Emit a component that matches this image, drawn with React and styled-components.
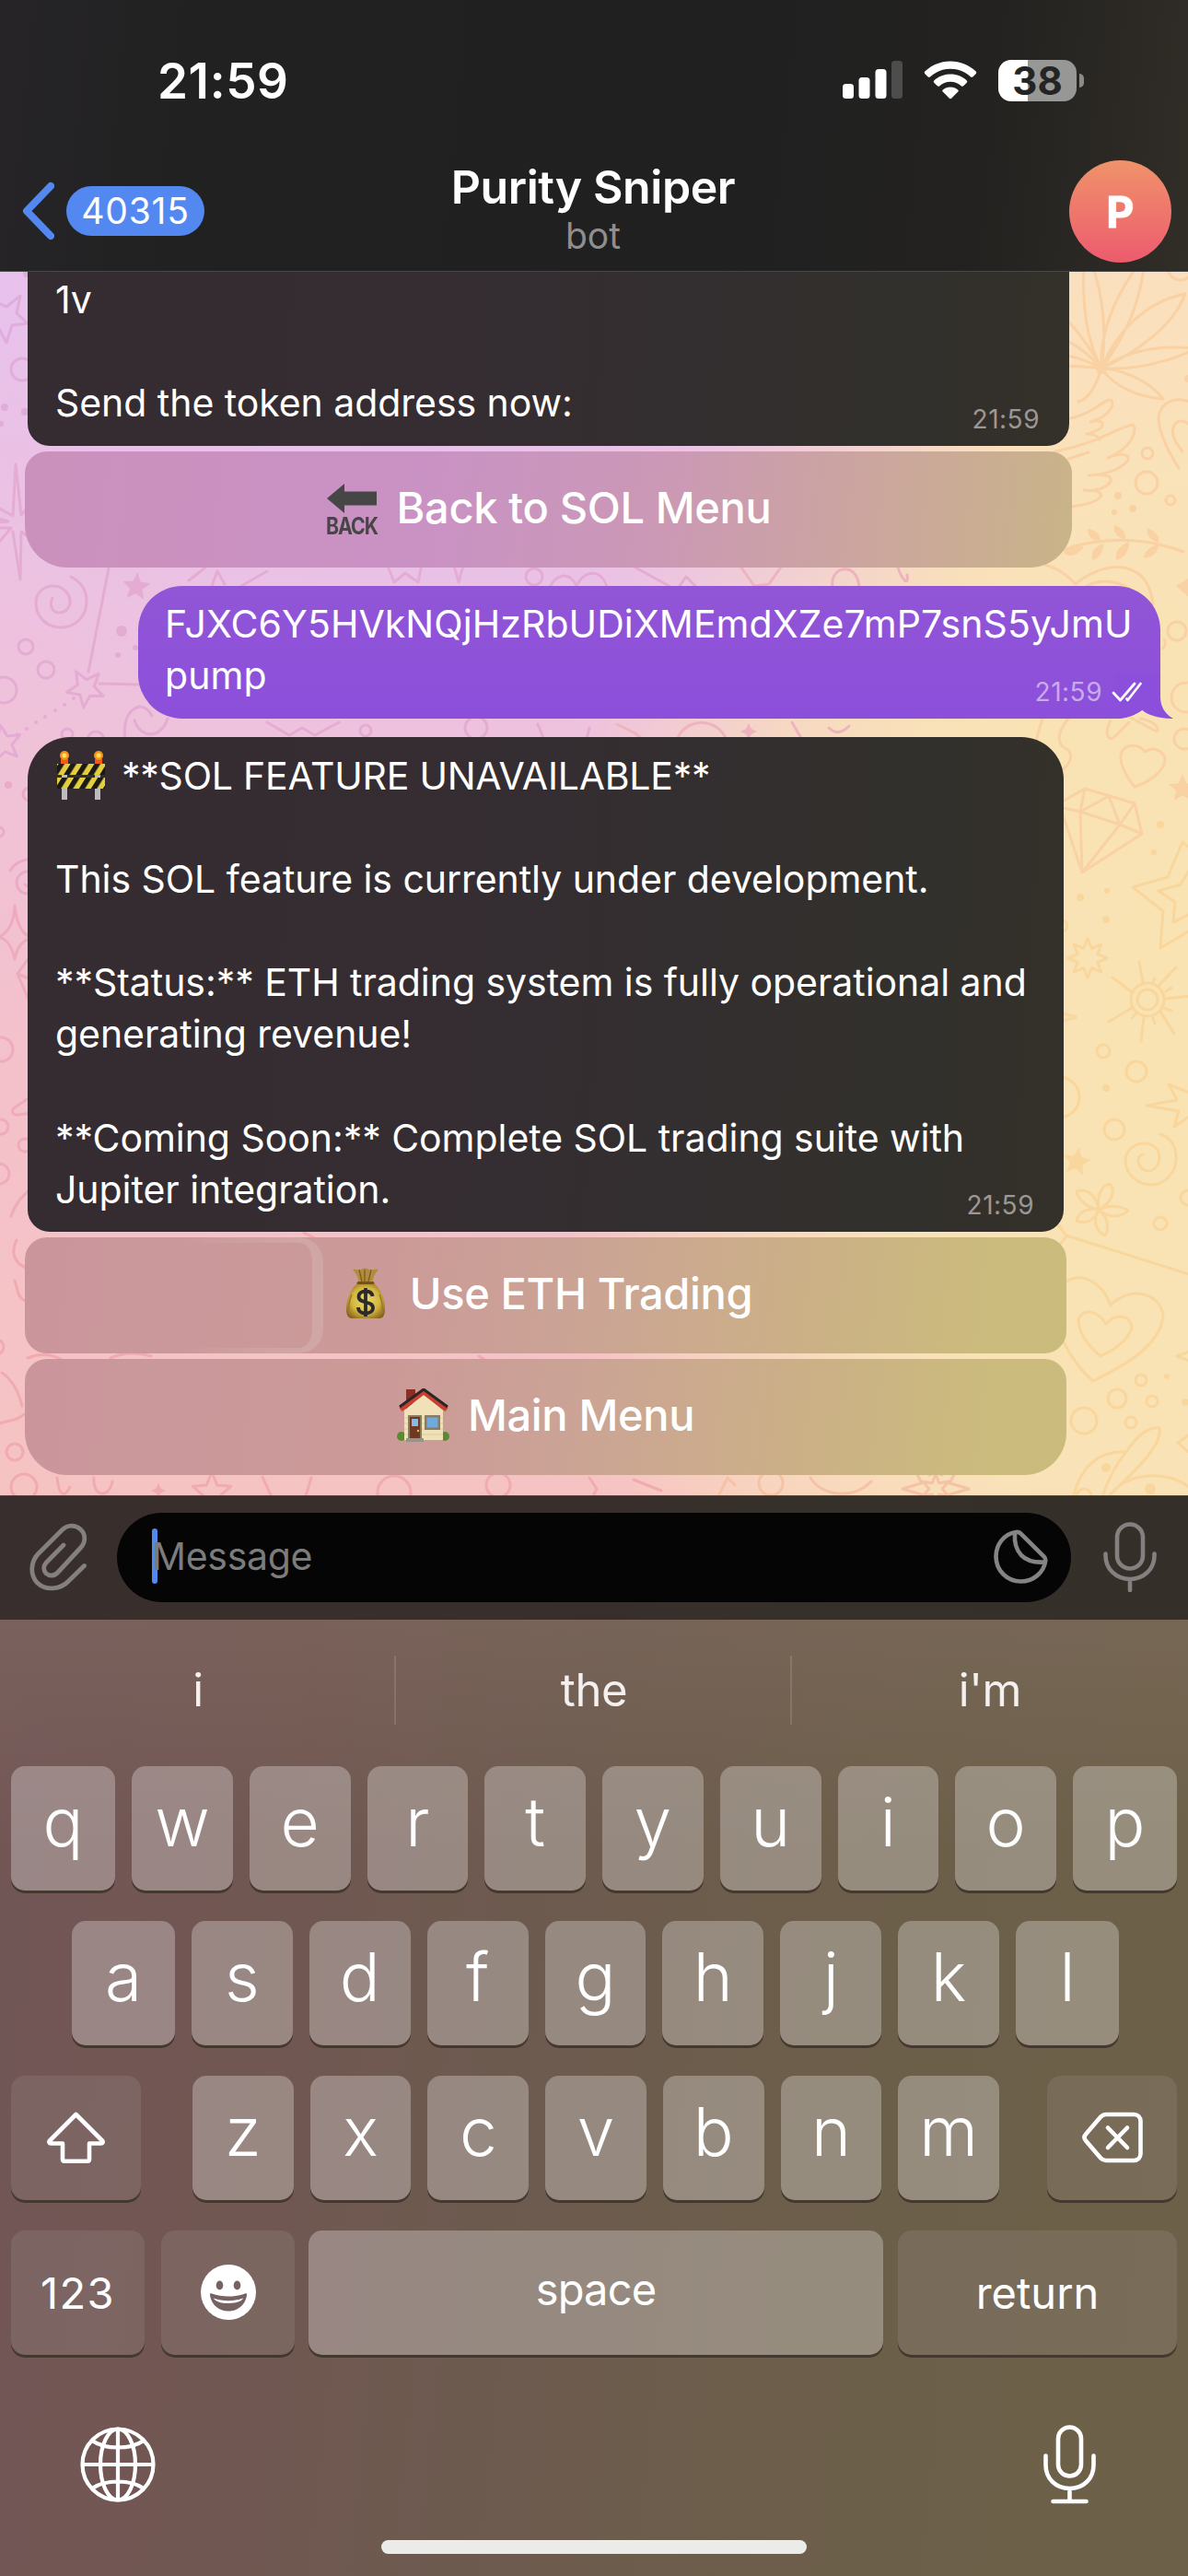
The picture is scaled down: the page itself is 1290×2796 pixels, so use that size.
import React from "react";
import styled, { createGlobalStyle, css } from "styled-components";

const GlobalStyle = createGlobalStyle`
  * { box-sizing: border-box; }
  body { margin: 0; background: #202020; }
`;

const Screen = styled.div`
  width: 1290px;
  height: 2796px;
  display: flex;
  flex-direction: column;
  overflow: hidden;
  color: #fff;
  font-family: "Inter", "Liberation Sans", sans-serif;
`;

/* ---------- header ---------- */

const Header = styled.header`
  height: 295px;
  flex: none;
  border-bottom: 1px solid #47474a;
  background: linear-gradient(96deg, #262427 0%, #212121 18%, #202020 60%, #232220 82%, #312d27 100%);
`;

const StatusBar = styled.div`
  height: 174px;
  padding: 0 113px 0 171px;
  display: flex;
  align-items: center;
  justify-content: space-between;
`;

const Clock = styled.div`
  font-size: 53px;
  font-weight: 600;
  letter-spacing: 0.6px;
  padding-top: 1px;
`;

const StatusIcons = styled.div`
  display: flex;
  align-items: center;
  gap: 23px;
`;

const BatteryWrap = styled.div`
  display: flex;
  align-items: center;
  gap: 3px;
`;

const BatteryBody = styled.div`
  width: 85px;
  height: 45px;
  border-radius: 14px;
  display: flex;
  align-items: center;
  justify-content: center;
  font-size: 42px;
  line-height: 45px;
  font-weight: 700;
  color: #242424;
  background: linear-gradient(90deg, #fff 38%, #979796 38%);
`;

const BatteryNub = styled.div`
  width: 5px;
  height: 15px;
  border-radius: 0 5px 5px 0;
  background: #8b8b8a;
`;

const NavBar = styled.nav`
  display: grid;
  grid-template-columns: 1fr auto 1fr;
  align-items: center;
  height: 111px;
  padding: 0 18px 0 23px;
`;

const BackLink = styled.div`
  display: flex;
  align-items: center;
  gap: 13px;
  padding-bottom: 2px;
`;

const CountPill = styled.span`
  width: 150px;
  height: 54px;
  border-radius: 27px;
  background: #5288f0;
  font-size: 39px;
  line-height: 54px;
  letter-spacing: 0.8px;
  text-align: center;
`;

const TitleBlock = styled.div`
  display: flex;
  flex-direction: column;
  align-items: center;
  padding: 0 7px 6px 0;
`;

const Title = styled.h1`
  margin: 0;
  font-size: 50px;
  line-height: 50px;
  font-weight: 600;
  letter-spacing: -0.4px;
`;

const Subtitle = styled.div`
  margin-top: 8px;
  font-size: 39px;
  line-height: 39px;
  color: #8e8e8e;
`;

const Avatar = styled.div`
  justify-self: end;
  width: 111px;
  height: 111px;
  border-radius: 50%;
  background: linear-gradient(#f0936a, #ec5b6e);
  font-size: 46px;
  line-height: 112px;
  font-weight: 700;
  text-align: center;
  -webkit-text-stroke: 1px #fff;
`;

/* ---------- chat ---------- */

const Chat = styled.main`
  position: relative;
  height: 1328px;
  flex: none;
  display: flex;
  flex-direction: column;
  align-items: flex-start;
  overflow: hidden;
  background:
    radial-gradient(ellipse 620px 420px at 36% 14%, #e8c1ea 0%, rgba(232, 193, 234, 0) 100%),
    radial-gradient(ellipse 760px 1000px at 104% 62%, #f9e3b3 0%, #f9e3b5 45%, rgba(249, 227, 181, 0) 100%),
    linear-gradient(90deg, rgba(251, 222, 196, 0) 50%, #fbdec2 88%),
    linear-gradient(180deg, #e8c1ee 0%, #edc1e0 22%, #f0c2d8 40%, #f4c1cb 65%, #f6c3c3 100%);
`;

const Wallpaper = styled.svg`
  position: absolute;
  inset: 0;
`;

const Bubble = styled.div`
  position: relative;
  flex: none;
  width: ${(p) => p.$width}px;
  height: ${(p) => p.$height}px;
  font-size: 41px;
  line-height: 56.1px;
  white-space: nowrap;
  ${(p) =>
    p.$outgoing
      ? css`
          margin: 20px 30px 20px auto;
          padding: 13px 29px;
          border-radius: 48px;
          letter-spacing: 0.06px;
          background: linear-gradient(#9155d6, #8c4fdb);
        `
      : css`
          margin-left: 30px;
          padding: ${p.$clipped ? 2 : 14}px 30px;
          border-radius: ${p.$clipped ? "0 0" : "46px 46px"} 24px 24px;
          letter-spacing: -0.05px;
          background: linear-gradient(94deg, #342c30 0%, #342d31 50%, #32302d 80%, #34302a 100%);
        `}
`;

const Meta = styled.div`
  position: absolute;
  right: ${(p) => (p.$outgoing ? 20 : 32)}px;
  bottom: 15px;
  display: flex;
  align-items: center;
  gap: 10px;
  font-size: 28px;
  line-height: 28px;
  letter-spacing: 0.5px;
  color: ${(p) => (p.$outgoing ? "#c9aaec" : "#9b9797")};
`;

const Tail = styled.svg`
  position: absolute;
  right: -14px;
  bottom: 0;
`;

const Heading = styled.div`
  display: flex;
  align-items: center;
  gap: 16px;
  height: 56.1px;
  letter-spacing: -0.23px;
`;

const Blank = styled.div`
  height: 56.1px;
`;

const InlineButton = styled.button`
  position: relative;
  flex: none;
  width: ${(p) => p.$width}px;
  height: 126px;
  margin: 6px 0 0 27px;
  padding: 0 0 5px;
  border: 0;
  border-radius: ${(p) => (p.$last ? "24px 24px 46px 46px" : "24px")};
  display: flex;
  align-items: center;
  justify-content: center;
  gap: 20px;
  color: #fff;
  font: 500 47px "Inter", sans-serif;
  letter-spacing: -0.35px;
  background: ${(p) =>
    p.$tone === "violet"
      ? "linear-gradient(97deg, #cb91bd 0%, #c992c4 38%, #cb98b6 60%, #cba79c 82%, #c9b488 100%)"
      : "linear-gradient(97deg, #ca969c 0%, #cb9a98 35%, #cba396 52%, #cbb087 74%, #cbbb7d 92%, #cabc7c 100%)"};
`;

const Progress = styled.span`
  position: absolute;
  left: 0;
  top: 0;
  width: 324px;
  height: 126px;
  border: solid rgba(255, 255, 255, 0.13);
  border-width: 6px 12px 6px 0;
  border-radius: 0 26px 26px 0;
  mask-image: linear-gradient(90deg, transparent 50%, #000 92%);
`;

/* ---------- composer ---------- */

const Composer = styled.div`
  flex: none;
  height: 135px;
  padding: 18px 36px 0 32px;
  display: flex;
  align-items: flex-start;
  border-top: 1px solid #4c4542;
  background: linear-gradient(90deg, #382e2d 0%, #382e2c 45%, #36302a 65%, #342f29 100%);
`;

const ComposerIcon = styled.span`
  flex: none;
  display: flex;
  align-items: center;
  height: 96px;
  color: #848080;
`;

const Input = styled.div`
  flex: none;
  width: 1036px;
  height: 97px;
  margin: 0 35px 0 32px;
  padding: 0 25px 3px 38px;
  border-radius: 49px;
  display: flex;
  align-items: center;
  background: #050505;
  font-size: 41px;
  letter-spacing: -0.3px;
  color: #7c7c7c;
`;

const Caret = styled.span`
  width: 6px;
  height: 60px;
  margin-right: -6px;
  border-radius: 3px;
  background: #5288f0;
`;

const StickerSlot = styled.span`
  display: flex;
  margin-left: auto;
`;

/* ---------- keyboard ---------- */

const Keyboard = styled.section`
  flex: 1;
  display: flex;
  flex-direction: column;
  background:
    linear-gradient(180deg, rgba(132, 110, 100, 0.45) 0%, rgba(112, 94, 84, 0) 24%),
    linear-gradient(96deg, #725657 0%, #715752 22%, #6c5b4e 48%, #6c5f4a 72%, #6c6148 100%);
`;

const Suggestions = styled.div`
  display: flex;
  padding-top: 39px;
  margin-bottom: 45px;
`;

const Suggestion = styled.div`
  flex: 1;
  height: 75px;
  line-height: 76px;
  font-size: 49px;
  letter-spacing: -0.4px;
  text-align: center;
  color: #f3f0ef;
  & + & {
    box-shadow: -2px 0 0 rgba(255, 255, 255, 0.13);
  }
`;

const Keys = styled.div`
  display: flex;
  flex-direction: column;
  gap: 33px;
`;

const KeyRow = styled.div`
  display: flex;
  gap: 18px;
  padding: ${(p) => (p.$inset ? "0 75px 0 78px" : "0 12px")};
`;

const Key = styled.div`
  height: 135px;
  display: flex;
  align-items: center;
  justify-content: center;
  border-radius: 15px;
  box-shadow: 0 3px 0 #45382f;
  ${(p) => (p.$width ? `width: ${p.$width}px; flex: none;` : "flex: 1;")}
  margin: 0 ${(p) => p.$after ?? 0}px 0 ${(p) => p.$before ?? 0}px;
  ${(p) =>
    p.$kind === "letter"
      ? "font-size: 73px; font-weight: 350; padding-bottom: 14px;"
      : `font-size: 47px; font-weight: 400; padding-bottom: ${p.$lift ?? 1}px;`}
  letter-spacing: ${(p) => p.$track ?? 0}px;
  ${(p) =>
    p.$kind === "control"
      ? "background: color-mix(in srgb, transparent, #a39d98 21%);"
      : "background: rgba(255, 255, 255, 0.285);"}
`;

const BottomBar = styled.div`
  display: flex;
  justify-content: space-between;
  align-items: center;
  height: 88px;
  margin-top: 75px;
  padding: 0 100px 0 87px;
`;

const HomeIndicator = styled.div`
  width: 462px;
  height: 15px;
  margin: 38px auto 0;
  border-radius: 8px;
  background: #ebebea;
`;

/* ---------- icons ---------- */

const Signal = () => (
  <svg width="65" height="42" viewBox="0 0 65 42" fill="#fff">
    <rect x="0" y="25" width="12" height="16" rx="3.5" />
    <rect x="17.5" y="18" width="12" height="23" rx="3.5" />
    <rect x="35.5" y="9" width="12" height="32" rx="3.5" />
    <rect x="53" y="0" width="12" height="41" rx="3.5" fill="#4d4d4d" />
  </svg>
);

const Wifi = () => (
  <svg width="58" height="42" viewBox="0 0 58 42" fill="#fff">
    <path d="M29 0.5c10.800 0 20.500 4.200 27.700 11 .7.700.7 1.700.1 2.400l-3.500 3.500c-.6.600-1.500.6-2.200.1C45.200 12 37.500 8.800 29 8.800S12.800 12 6.900 17.500c-.7.500-1.600.5-2.200-.1l-3.500-3.500c-.6-.7-.6-1.700.1-2.400C8.500 4.700 18.200.5 29 .5z" />
    <path d="M29 14.500c6.900 0 13.100 2.600 17.800 6.900.7.600.7 1.600 0 2.300l-3.600 3.600c-.6.600-1.500.6-2.200.1C37.800 24.500 33.600 22.800 29 22.800s-8.800 1.700-12 4.600c-.7.500-1.600.5-2.200-.1l-3.600-3.600c-.7-.7-.7-1.700 0-2.300 4.700-4.300 10.900-6.900 17.800-6.900z" />
    <path d="M29 28.500c3.200 0 6 1.100 8.200 2.900.7.600.7 1.500.1 2.200l-7.200 7.200c-.6.600-1.600.6-2.200 0l-7.200-7.200c-.6-.7-.6-1.600.1-2.200 2.200-1.800 5-2.900 8.200-2.900z" />
  </svg>
);

const BackChevron = () => (
  <svg width="36" height="64" viewBox="0 0 36 64" fill="none" stroke="#5288f0" strokeWidth="8" strokeLinecap="round" strokeLinejoin="round">
    <path d="M32 5 6 32 32 59" />
  </svg>
);

const DoubleCheck = () => (
  <svg width="33" height="22" viewBox="0 0 33 22" fill="none" stroke="#fff" strokeWidth="2.700" strokeLinecap="round" strokeLinejoin="round">
    <path d="M2 12 9.500 20 25 2M16.500 18.500 17.500 20 31.500 2" />
  </svg>
);

const Barricade = () => (
  <svg width="56" height="56" viewBox="0 0 56 56">
    <defs>
      <pattern id="stripes" width="13" height="14" patternUnits="userSpaceOnUse" patternTransform="skewX(-32)">
        <rect width="13" height="14" fill="#e3cf3b" />
        <rect width="6.500" height="14" fill="#1c1a17" />
      </pattern>
    </defs>
    <rect x="7" y="22" width="6" height="32" fill="#bcbcc0" />
    <rect x="43" y="22" width="6" height="32" fill="#bcbcc0" />
    <rect x="6" y="10" width="8" height="5" fill="#f05a1c" />
    <rect x="43" y="10" width="8" height="5" fill="#f05a1c" />
    <circle cx="10" cy="6" r="5" fill="#f7951d" />
    <circle cx="47" cy="6" r="5" fill="#f7951d" />
    <circle cx="10" cy="6" r="2.500" fill="#ffe25a" />
    <circle cx="47" cy="6" r="2.500" fill="#ffe25a" />
    <rect x="2" y="15" width="52" height="12" fill="url(#stripes)" />
    <rect x="2" y="30" width="52" height="12" fill="url(#stripes)" />
  </svg>
);

const BackArrowWord = styled.span`
  width: 57px;
  display: flex;
  flex-direction: column;
  align-items: center;
  gap: 3px;
  color: #474647;
  font-size: 25px;
  line-height: 22px;
  font-weight: 700;
  letter-spacing: -1.2px;
  padding-top: 6px;
`;

const Condensed = styled.span`
  transform: scaleX(0.85);
`;

const BackEmoji = () => (
  <BackArrowWord>
    <svg width="54" height="32" viewBox="0 0 54 32" fill="#474647">
      <path d="M0 16 19 0V8.500H54V23.500H19V32z" />
    </svg>
    <Condensed>BACK</Condensed>
  </BackArrowWord>
);

const MoneyBag = () => (
  <svg width="57" height="57" viewBox="0 0 57 57">
    <defs>
      <radialGradient id="bag" cx=".5" cy=".5" r=".6">
        <stop offset="0" stopColor="#eadb74" />
        <stop offset=".6" stopColor="#d3b53f" />
        <stop offset="1" stopColor="#86631c" />
      </radialGradient>
    </defs>
    <path d="M15 3c4-2 6 2 9 0s5-2 9 0 5-2 10 0c-4 4-6 9-7 15H22C21 12 19 7 15 3z" fill="#b08d3c" />
    <path d="M22 3l3 13M28 3v14M35 3l-3 13" stroke="#7d5b21" strokeWidth="1.300" fill="none" />
    <path d="M22 17h14c8 4 14 17 14 29 0 6-2 10-6 10H14c-4 0-6-4-6-10 0-12 6-25 14-29z" fill="url(#bag)" />
    <path d="M21 17.500h16" stroke="#75521c" strokeWidth="3" strokeLinecap="round" />
    <path d="M14 30c-3 7-4 14-3 21M44 30c3 7 4 14 3 21" stroke="#9a7828" strokeWidth="1.500" fill="none" />
    <path d="M36.500 32c-.5-4-4-5.500-7.500-5.500-4 0-7.500 2-7.500 6 0 8 15.500 4 15.500 12 0 4-4 6-8 6s-8-2-8-6.500M29 23v31" fill="none" stroke="#2c2a2b" strokeWidth="3.800" />
  </svg>
);

const House = () => (
  <svg width="57" height="58" viewBox="0 0 57 58">
    <circle cx="5" cy="52" r="5" fill="#5b8a32" />
    <circle cx="52" cy="52" r="5" fill="#5b8a32" />
    <path d="M10 1h10v13l-10 9z" fill="#8c2f22" />
    <path d="M8 56V24L29 6l21 18v32z" fill="#f0e1b8" />
    <path d="M8 32h42M8 38h42M8 44h42M8 50h42" stroke="#dccb9d" strokeWidth="1" />
    <path d="M4 23 29 4l25 19" fill="none" stroke="#c8402f" strokeWidth="5" strokeLinejoin="miter" />
    <path d="M3 20 29 1l26 19" fill="none" stroke="#2b2526" strokeWidth="3" />
    <rect x="12" y="29" width="15" height="26" fill="#8a7b63" />
    <rect x="14" y="31" width="11" height="24" fill="#6e3823" />
    <rect x="16" y="33" width="7" height="8" fill="#86b9e6" />
    <circle cx="23" cy="46" r="1.200" fill="#f2c13e" />
    <rect x="30" y="29" width="17" height="16" fill="#8a7b63" />
    <rect x="32.500" y="31.500" width="12" height="11" fill="#6fa9dd" />
    <rect x="10" y="54" width="19" height="4" fill="#98928a" />
  </svg>
);

const Paperclip = () => (
  <svg width="63" height="74" viewBox="0 0 63 74" fill="none" stroke="currentColor" strokeWidth="4.800" strokeLinecap="round" strokeLinejoin="round">
    <path d="M59.500 46.500 42 63.500C34 72 18 74 8.500 65 0 56 1.500 42 9.500 33.500L35.500 7.500c5.500-5.500 14-6 20-.5 6 5.500 5.500 14.500 0 20L30.500 54c-3.500 3.700-9 4-12.500.8-3.300-3.300-3-8.500.5-12L37 24" />
  </svg>
);

const Sticker = () => (
  <svg width="59" height="59" viewBox="0 0 59 59" fill="none" stroke="#848484" strokeWidth="4.600" strokeLinecap="round" strokeLinejoin="round">
    <path d="M24 3C11 5 2.500 16.500 2.500 29.500c0 15 12 27 27 27 13.500 0 25-9.500 26.800-22.500.2-2-.3-3-1.600-4.300L29 4.200C27.600 2.900 26 2.600 24 3z" />
    <path d="M23 4c-1.500 20 9 33 32 31.500" />
  </svg>
);

const ComposerMic = () => (
  <svg width="58" height="76" viewBox="0 0 58 76" fill="none" stroke="currentColor" strokeWidth="4.600" strokeLinecap="round">
    <rect x="15" y="2.500" width="28" height="48" rx="14" />
    <path d="M2.500 34.500v2C2.500 51 14 62 29 62s26.500-11 26.500-25.500v-2M29 62v12" />
  </svg>
);

const ShiftIcon = () => (
  <svg width="65" height="56" viewBox="0 0 65 56" fill="none" stroke="#fff" strokeWidth="4.600" strokeLinejoin="round">
    <path d="M32.500 3 61 31.500c1.300 1.300.5 3-1.300 3H47v17c0 1.500-.8 2.300-2.300 2.300H20.300c-1.500 0-2.300-.8-2.300-2.300v-17H5.300c-1.800 0-2.600-1.700-1.300-3z" />
  </svg>
);

const BackspaceIcon = () => (
  <svg width="66" height="56" viewBox="0 0 66 56" fill="none" stroke="#fff" strokeWidth="4.600" strokeLinejoin="round" strokeLinecap="round">
    <path d="M26 3h30c4.500 0 7.500 3 7.500 7.500v35c0 4.500-3 7.500-7.500 7.500H26c-2.500 0-4-.8-5.500-2.300L4 31.500c-2-2.300-2-4.700 0-7L20.500 5.300C22 3.800 23.500 3 26 3z" />
    <path d="M28 17.500 49 39M49 17.500 28 39" />
  </svg>
);

const SmileyIcon = () => (
  <svg width="60" height="60" viewBox="0 0 60 60">
    <circle cx="30" cy="30" r="30" fill="#fff" />
    <ellipse cx="20.500" cy="22.500" rx="3.800" ry="5" fill="#766262" />
    <ellipse cx="39.500" cy="22.500" rx="3.800" ry="5" fill="#766262" />
    <path d="M12 31.500c11 4 25 4 36 0 1.500-.5 2.300.3 2 1.800C48.500 43.500 40.500 50.500 30 50.500S11.500 43.500 10 33.300c-.3-1.500.5-2.300 2-1.800z" fill="#766262" />
    <path d="M14 36.500c10 3.500 22 3.500 32 0-1.500 3.500-7.500 5.500-16 5.500s-14.500-2-16-5.500z" fill="#fff" />
  </svg>
);

const GlobeIcon = () => (
  <svg width="82" height="82" viewBox="0 0 82 82" fill="none" stroke="#fff" strokeWidth="4.200">
    <circle cx="41" cy="41" r="38.500" />
    <ellipse cx="41" cy="41" rx="19" ry="38.500" />
    <path d="M41 2.500v77M2.500 41h77M13 15c14 10 42 10 56 0M13 67c14-10 42-10 56 0" />
  </svg>
);

const DictationMic = () => (
  <svg width="57" height="86" viewBox="0 0 57 86" fill="none" stroke="#fff" strokeWidth="4.600" strokeLinecap="round">
    <rect x="16" y="2.500" width="25" height="53" rx="12.500" />
    <path d="M2.500 33.500v10C2.500 58 13 69 28.500 69s26-11 26-25.500v-10M28.500 69v14M10.500 83h36" />
  </svg>
);

/* ---------- wallpaper doodles ---------- */

const starPath = (cx, cy, r, inner = 0.45, n = 5, rot = -90) => {
  const pts = [];
  for (let i = 0; i < n * 2; i++) {
    const a = ((rot + (i * 180) / n) * Math.PI) / 180;
    const rr = i % 2 ? r * inner : r;
    pts.push(`${(cx + rr * Math.cos(a)).toFixed(1)} ${(cy + rr * Math.sin(a)).toFixed(1)}`);
  }
  return `M${pts.join("L")}Z`;
};

const Star = ({ at, inner, n, rot, solid }) => (
  <path d={starPath(at[0], at[1], at[2], inner, n, rot)} fill={solid ? "currentColor" : "none"} stroke={solid ? "none" : undefined} />
);

const Rings = ({ list }) => list.map(([x, y, r]) => <circle key={`${x}-${y}`} cx={x} cy={y} r={r} />);

const Dots = ({ list }) =>
  list.map(([x, y, r]) => <circle key={`${x}-${y}`} cx={x} cy={y} r={r} fill="currentColor" stroke="none" />);

const DoodleGroup = styled.g`
  color: ${(p) => p.$ink};
  stroke: ${(p) => p.$ink};
  stroke-width: 3;
  stroke-linecap: round;
  stroke-linejoin: round;
  fill: none;
`;

const Doodles = () => (
  <Wallpaper width="1290" height="1328" viewBox="0 295 1290 1328">
    <DoodleGroup $ink="#e0abdd">
      <path d="M-8 326 7 333 22 321 18 340 30 351 13 353 7 372-2 355" />
      <Rings list={[[24, 401, 12]]} />
      <Dots list={[[5, 442, 4], [27, 447, 4], [1, 460, 3], [29, 297, 4]]} />
    </DoodleGroup>
    <DoodleGroup $ink="#e5acd3">
      <path d="M17 504 14 560-4 550M17 504 23 559 32 549M-4 573 12 573-4 592M-4 562 9 566-4 567M14 577 22 629 23 577 34 585" />
      <path d="M77 626c12 6 17 16 17 27 0 16-12 28-28 28s-27-12-27-27c0-10 8-18 18-18s19 7 19 17c0 7-5 12-12 12s-11-8-7-16" />
      <path d="M118 617 96 729M108 742 152 743M137 812c-4-22-2-40 14-45 6 0 11 4 14 10" />
      <Star at={[148, 637, 16]} rot={-85} solid />
      <Star at={[93, 747, 21]} rot={-120} />
      <Star at={[4, 807, 20]} rot={-100} />
      <Rings list={[[28, 702, 8], [50, 727, 9], [4, 749, 14], [73, 797, 6], [104, 803, 9], [397, 793, 6], [517, 790, 12], [580, 626, 9]]} />
      <Dots list={[[132, 685, 6], [147, 703, 3], [128, 711, 3], [80, 758, 2], [70, 765, 2], [60, 771, 2], [49, 778, 2], [39, 784, 2], [29, 791, 2], [19, 797, 2]]} />
      <path d="M205 630l18-14M230 636l6-16 8 14M262 636l28-16M420 612l8 20 12-10 14 10 4-20M492 610l6 22 6-22M596 640c6-16 22-22 30-4 8-18 28-20 34 4M690 616l40 22M146 782c8 22 30 18 36-2M290 784l24 14 14-8 14 8 26-14" />
      <path d="M735 640l10-14 12 12M584 786l8 20M640 790l-4 16" />
    </DoodleGroup>
    <DoodleGroup $ink="#eeb3bf">
      <path d="M805 616l14 20 16-2 14-20M905 640c-8-24 26-34 28-2M975 616c4 12 12 22 10 8M670 786l20 10 14 12M735 804c6-24 44-28 54 0M860 784l14 24M900 790c8 8 16 4 22-2" />
      <Star at={[813, 794, 9]} n={4} solid />
    </DoodleGroup>
    <DoodleGroup $ink="#ebaac8">
      <Dots list={[[9, 852, 4]]} />
      <Rings list={[[32, 862, 7], [-1, 903, 5], [30, 958, 12]]} />
      <path d="M11 945c4-7 10-11 24-13M27 960c3 3 6 2 8 0" />
    </DoodleGroup>
    <DoodleGroup $ink="#edabbd">
      <path d="M16 983c-1 20-7 30-18 34 10 2 15 10 18 24 2-12 8-20 18-23-10-4-16-14-18-35zM34 1036 19 1057 36 1064M19 1057 34 1092" />
      <Rings list={[[1, 1139, 13], [1, 1223, 8], [27, 1243, 7], [-1, 1274, 11]]} />
      <path d="M34 1190 16 1202c-5 4-2 9 4 8L34 1208M12 1320c4-12 10-20 22-30" />
    </DoodleGroup>
    <DoodleGroup $ink="#f1aab0">
      <path d="M18 1346c-6 12-4 24 10 30M16 1390c4 10 2 18 12 22M2 1490c12 8 18 20 22 36M0 1545c10-4 18-2 26-10M30 1474c14-6 30-4 40 4M120 1474c14-6 30-6 44-2M330 1338l12 6M520 1472l10 6" />
      <Rings list={[[-4, 1462, 8], [16, 1576, 9], [26, 1614, 14], [428, 1620, 18], [541, 1612, 13]]} />
      <Star at={[230, 1620, 22]} />
      <Star at={[172, 1618, 8]} solid n={4} />
      <path d="M62 1604c2 20 8 22 14 10M102 1604c-2 20 16 24 20 4M285 1603l10 22M338 1604l-6 20M640 1604l8 12-6 12M688 1606l30 12" />
    </DoodleGroup>
    <DoodleGroup $ink="#f5c2a6">
      <path d="M880 1604c12 20 46 24 66 4M780 1624l10-20 8 8" />
      <Rings list={[[837, 1610, 13]]} />
      <Star at={[1016, 1616, 36]} n={8} />
      <Star at={[1016, 1616, 16]} n={6} />
    </DoodleGroup>
    <DoodleGroup $ink="#f9d1a3">
      <path d="M1196 400c-16-30-21-70-19-110M1196 400c6-40 2-76-9-110M1196 400c-2-40 14-76 38-110M1196 400c20-28 40-60 46-110M1196 400c18-44 52-74 91-81-12 32-46 60-91 81zM1196 400c26-18 60-26 100-22M1196 400c34 2 68-6 100-20M1196 400c18 0 52 12 67 33-26-2-52-12-67-33zM1196 400c-6 18-12 32-25 36M1196 400c-10-20-24-38-38-54M1196 400c-12-14-24-24-38-30M1196 400c-14-8-26-12-38-14M1196 400c-14-2-26-2-38-3" />
      <Dots list={[[1196, 400, 6]]} />
      <path d="M1158 455c24-4 34-16 46-21 8-1 5 17-20 24 10-2 16-1 12 6-4 4-9 5-16 7 6 0 12 2 14 6M1146 490c50-10 66-26 84-29 6 6-2 26-27 36 14-6 24-4 22 2-6 10-24 16-43 17 16-2 26 0 24 6-4 8-18 12-29 10 14 0 20 2 18 7-4 6-14 8-31 11M1160 498l22-7" />
      <path d="M1280 508c-12-18-22-40-22-55 2-16 18-24 36-16M1284 490c-10-12-14-22-8-30 6-6 14-2 18 4" />
      <Rings list={[[1282, 290, 14], [1246, 492, 6], [1245, 524, 12], [1271, 543, 5], [1278, 685, 10], [1288, 757, 16]]} />
      <Dots list={[[1214, 538, 4], [1230, 552, 4], [1210, 556, 3], [1290, 411, 4]]} />
      <path d="M1150 598 Q1220 574 1285 599M1130 612c20 4 30 14 38 22M1168 634c24-22 78-34 84 22M1180 636c16-8 34-6 48 4M1262 704c4-2 4-8 2-10" />
      <path d="M1155 600q10-14 22-6-12 14-22 6zM1195 588q-14-2-14-14 14 2 14 14zM1222 586q-14-4-12-16 14 4 12 16zM1258 589q-14-4-12-16 14 6 12 16zM1198 590q-14 4-12 18 12-4 12-18zM1226 588q-16 6-14 20 14-4 14-20zM1258 590q-16 6-16 16 16-2 16-16zM1277 636l16-10v24z" fill="currentColor" stroke="none" />
      <path d="M1206 782c-8 14-2 26 6 16l14-14M1226 778l30 16c4-4-4-12-18-14M1133 776l-8 28M1160 780c-16 20-10 30 0 34 8 10-4 22-14 26" />
      <Rings list={[[1286, 802, 11]]} />
      <path d="M1232 854c-10-12-18-28-14-38 6-10 20-8 25 0 8-6 20-2 22 8 0 14-20 26-33 30z" />
      <path d="M1178 856 1232 872 1240 905 1175 947 1150 872zM1150 876 1173 881 1216 895 1240 905M1178 856 1173 881 1175 947M1204 864 1216 895 1232 872M1173 881 1204 864M1216 895 1175 947" />
      <Star at={[1284, 856, 16]} solid />
    </DoodleGroup>
    <DoodleGroup $ink="#f9d69b">
      <Dots list={[[1260, 895, 4], [1253, 925, 3], [1173, 974, 4], [1202, 967, 3], [1201, 998, 4]]} />
      <path d="M1294 922 1284 914 1268 952 1230 963 1263 989 1260 1029 1294 1009M1294 940 1282 960 1258 967 1276 979 1274 1001 1294 991M1155 1100l13 4-13 4" />
      <Star at={[1181, 1040, 21]} n={8} inner={0.55} />
      <Rings list={[[1246, 1085, 18], [1246, 1085, 11], [1198, 1141, 7], [1234, 1163, 11], [1210, 1226, 11], [1150, 1191, 22], [1260, 1328, 7], [1290, 1300, 8], [1153, 1005, 6]]} />
      <path d="M1228 1076 1208 1061M1241 1066 1237 1044M1258 1070 1277 1050M1265 1084 1294 1081M1260 1098 1275 1122M1242 1104 1239 1130M1229 1094 1204 1109M1252 1066l2-4M1266 1076l6-4M1264 1094l8 3M1252 1105l2 6M1234 1100l-5 5" />
      <path d="M1294 1187 1269 1177 1278 1194 1245 1200 1280 1206 1275 1223 1294 1210" />
      <path d="M1260 1231c12 4 17 14 17 26 0 16-12 29-27 29s-28-12-28-27c0-10 10-18 20-18s17 6 17 15-6 15-12 15-12-6-11-13c1-4 4-5 6-5" />
      <Dots list={[[1201, 1181, 4], [1267, 1494, 3], [1287, 1522, 4]]} />
      <Star at={[1169, 1261, 16]} solid rot={-80} />
      <path d="M1193 1313c-2-14 2-26 12-28 8 8 0 22-12 28zM1193 1313c12-6 24-4 32 1-8 8-22 8-32-1zM1193 1313c10 8 12 20 7 28-10-4-14-16-7-28zM1193 1313c-4 12-14 16-24 12 2-10 12-14 24-12zM1193 1313c-12-2-22-10-24-20 12-4 22 6 24 20z" />
      <path d="M1150 1330l8 12-8 10M1158 1341 1294 1384M1155 1393c20-16 44 2 51 24 22-24 56-12 57 12-4 34-48 56-76 70-12-10-24-26-34-46M1195 1472c-14-12-24-26-24-40 6-14 22-8 30 5 8-10 24-12 28 2 0 12-18 26-34 33z" />
      <Rings list={[[1239, 1498, 6], [1213, 1518, 10], [1251, 1521, 6], [1228, 1544, 6], [1177, 1542, 14], [1177, 1624, 8]]} />
      <path d="M1165 1626c8-34 28-52 58-50 10-16 24-28 36-26 4 22-36 54-57 76M1222 1577c-10 12-18 28-24 44M1204 1624c20-26 62-30 90-8M1278 1472l16-6v12zM1279 1566l14-10v22z" />
      <Dots list={[[1201, 1593, 5], [1249, 1616, 6]]} />
    </DoodleGroup>
  </Wallpaper>
);

/* ---------- sections ---------- */

const TopArea = () => (
  <Header>
    <StatusBar>
      <Clock>21:59</Clock>
      <StatusIcons>
        <Signal />
        <Wifi />
        <BatteryWrap>
          <BatteryBody>38</BatteryBody>
          <BatteryNub />
        </BatteryWrap>
      </StatusIcons>
    </StatusBar>
    <NavBar>
      <BackLink>
        <BackChevron />
        <CountPill>40315</CountPill>
      </BackLink>
      <TitleBlock>
        <Title>Purity Sniper</Title>
        <Subtitle>bot</Subtitle>
      </TitleBlock>
      <Avatar>P</Avatar>
    </NavBar>
  </Header>
);

const Conversation = () => (
  <Chat>
    <Doodles />
    <Bubble $width={1131} $height={189} $clipped>
      <div>1v</div>
      <Blank />
      <div>Send the token address now:</div>
      <Meta>21:59</Meta>
    </Bubble>
    <InlineButton $width={1137} $tone="violet" $last>
      <BackEmoji />
      Back to SOL Menu
    </InlineButton>
    <Bubble $width={1110} $height={144} $outgoing>
      <div>FJXC6Y5HVkNQjHzRbUDiXMEmdXZe7mP7snS5yJmU</div>
      <div>pump</div>
      <Tail width="62" height="48" viewBox="0 0 62 48">
        <path d="M0 48C12 48 20 44 28 38.500 34 44 46 48 62 48 53 43 48 35 48 24V0H0z" fill="#8c4fdb" />
      </Tail>
      <Meta $outgoing>
        21:59
        <DoubleCheck />
      </Meta>
    </Bubble>
    <Bubble $width={1125} $height={537}>
      <Heading>
        <Barricade />
        <span>**SOL FEATURE UNAVAILABLE**</span>
      </Heading>
      <Blank />
      <div>This SOL feature is currently under development.</div>
      <Blank />
      <div>**Status:** ETH trading system is fully operational and</div>
      <div>generating revenue!</div>
      <Blank />
      <div>**Coming Soon:** Complete SOL trading suite with</div>
      <div>Jupiter integration.</div>
      <Meta>21:59</Meta>
    </Bubble>
    <InlineButton $width={1131}>
      <Progress />
      <MoneyBag />
      Use ETH Trading
    </InlineButton>
    <InlineButton $width={1131} $last>
      <House />
      Main Menu
    </InlineButton>
  </Chat>
);

const MessageComposer = () => (
  <Composer>
    <ComposerIcon>
      <Paperclip />
    </ComposerIcon>
    <Input>
      <Caret />
      Message
      <StickerSlot>
        <Sticker />
      </StickerSlot>
    </Input>
    <ComposerIcon>
      <ComposerMic />
    </ComposerIcon>
  </Composer>
);

const LetterKeys = ({ letters, ends }) =>
  [...letters].map((letter, i) => (
    <Key key={letter} $kind="letter" $width={i === 0 || i === letters.length - 1 ? ends : undefined}>
      {letter}
    </Key>
  ));

const KeyboardArea = () => (
  <Keyboard>
    <Suggestions>
      <Suggestion>i</Suggestion>
      <Suggestion>the</Suggestion>
      <Suggestion>i'm</Suggestion>
    </Suggestions>
    <Keys>
      <KeyRow>
        <LetterKeys letters="qwertyuiop" ends={113} />
      </KeyRow>
      <KeyRow $inset>
        <LetterKeys letters="asdfghjkl" ends={112} />
      </KeyRow>
      <KeyRow>
        <Key $kind="control" $width={141} $after={38}>
          <ShiftIcon />
        </Key>
        <LetterKeys letters="zxcvbnm" />
        <Key $kind="control" $width={141} $before={34}>
          <BackspaceIcon />
        </Key>
      </KeyRow>
      <KeyRow>
        <Key $kind="control" $width={145} $track={1.4}>
          123
        </Key>
        <Key $kind="control" $width={145}>
          <SmileyIcon />
        </Key>
        <Key $before={-3} $lift={8} $track={-0.8}>
          space
        </Key>
        <Key $kind="control" $width={303} $before={-2}>
          return
        </Key>
      </KeyRow>
    </Keys>
    <BottomBar>
      <GlobeIcon />
      <DictationMic />
    </BottomBar>
    <HomeIndicator />
  </Keyboard>
);

export default function App() {
  return (
    <>
      <GlobalStyle />
      <Screen>
        <TopArea />
        <Conversation />
        <MessageComposer />
        <KeyboardArea />
      </Screen>
    </>
  );
}
